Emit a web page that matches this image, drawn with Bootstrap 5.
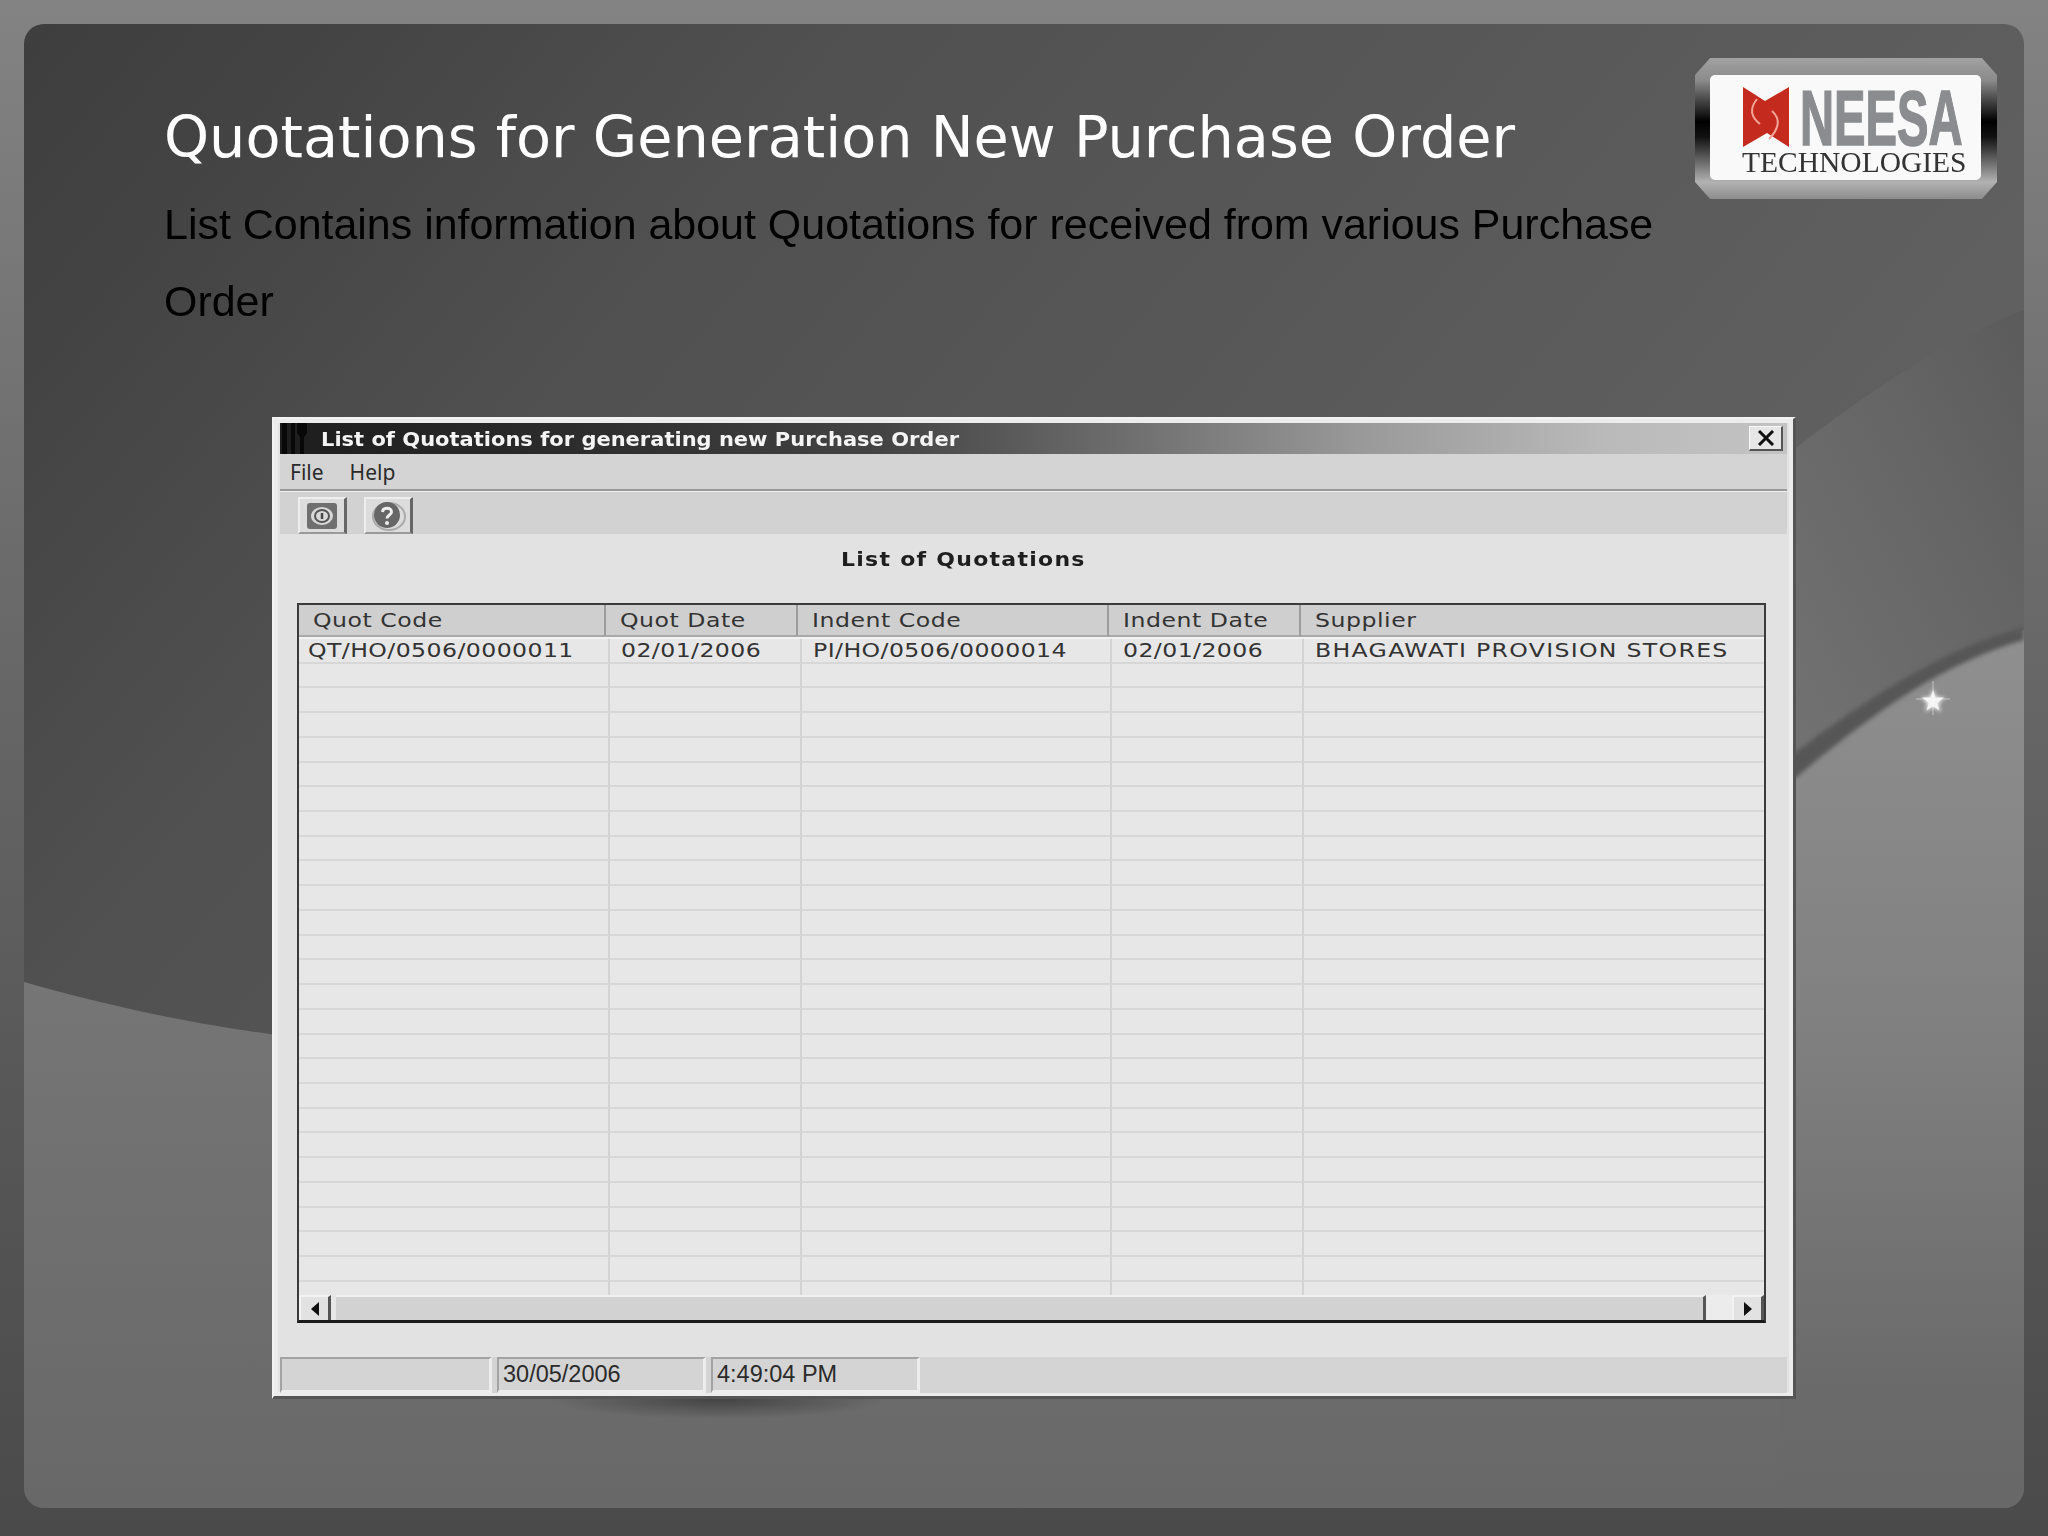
<!doctype html>
<html lang="en">
<head>
<meta charset="utf-8">
<title>Quotations for Generation New Purchase Order</title>
<link rel="stylesheet" href="https://cdn.jsdelivr.net/npm/bootstrap@5.3.0/dist/css/bootstrap.min.css">
<style>
html,body{margin:0;width:2048px;height:1536px;overflow:hidden;}
body{font-family:"Liberation Sans",Arial,sans-serif;background:linear-gradient(180deg,#838383 0,#6c6c6c 35%,#585858 70%,#4a4a4a 100%);}
.frame{padding:24px;height:1536px;filter:blur(.55px);}
.slide-panel{position:relative;width:2000px;height:1484px;border-radius:20px;overflow:hidden;background:linear-gradient(130deg,#3e3e3e 0,#444 10%,#505050 25%,#5e5e5e 62%,#6a6a6a 100%);}
.bg-art{position:absolute;inset:0;width:2000px;height:1484px;}
.slide-flow{position:relative;padding:74px 0 0 140px;}
.slide-head{width:1800px;height:319px;}
.slide-copy{width:1532px;}
.slide-title{font-family:"DejaVu Sans",Verdana,sans-serif;font-weight:400;font-size:57.3px;line-height:80px;color:#fff;margin:0 0 8px;white-space:nowrap;}
.slide-text{font-size:42.95px;line-height:77px;color:#000;margin:0;}
.logo-bezel{position:absolute;left:1671px;top:34px;width:302px;height:141px;padding:17px 15px 19px;clip-path:polygon(5% 0,95% 0,100% 12%,100% 88%,95% 100%,5% 100%,0 88%,0 12%);background:linear-gradient(180deg,#a2a2a2 0,#8a8a8a 16%,#5a5a5a 26%,#000 45%,#111 56%,#707070 75%,#b2b2b2 88%,#8c8c8c 100%);}
.logo-face{position:relative;width:271px;height:105px;background:#f9f9f9;border-radius:5px;overflow:hidden;}
.logo-mark{position:absolute;left:33px;top:12px;width:46px;height:60px;}
.logo-name{position:absolute;left:90px;top:15px;font-weight:700;font-size:78px;line-height:56px;color:#8a8c8f;-webkit-text-stroke:1.5px #8a8c8f;transform:scaleX(.605);transform-origin:0 50%;white-space:nowrap;}
.logo-sub{position:absolute;left:32px;top:73px;font-family:"Liberation Serif",serif;font-size:29.5px;line-height:28px;color:#333;white-space:nowrap;}
.app-window{margin-left:108px;width:1524px;height:982px;background:#e2e2e2;border:solid;border-width:2px 3px 3px 2px;border-color:#f2f2f2 #555 #555 #f2f2f2;box-shadow:inset 0 0 0 4px #ececec;padding:4px 4px 3px;border-radius:0;display:flex;flex-direction:column;}
.win-title{height:31px;flex:none;background:linear-gradient(90deg,#1d1d1d 0,#2d2d2d 20%,#444 40%,#6b6b6b 55%,#9a9a9a 72%,#bababa 88%,#c3c3c3 100%);display:flex;align-items:center;padding-right:4px;margin:0 2px;}
.win-glyph{width:41px;height:31px;flex:none;}
.win-caption{font-family:"DejaVu Sans",sans-serif;font-weight:700;font-size:20px;color:#f4f4f4;white-space:nowrap;display:inline-block;transform:scaleX(1.05);transform-origin:0 50%;}
.win-close{margin-left:auto;width:34px;height:25px;padding:0;background:#e6e6e6;border:solid;border-width:1px 2px 2px 1px;border-color:#f8f8f8 #555 #555 #f8f8f8;border-radius:0;display:flex;align-items:center;justify-content:center;}
.menu-strip{height:37px;flex:none;background:#d4d4d4;padding:0 0 0 10px;margin:0 2px;border-bottom:2px solid #9a9a9a;flex-wrap:nowrap;justify-content:flex-start;gap:26px;}
.menu-entry{font-family:"Noto Sans",sans-serif;font-size:21px;line-height:30px;color:#2a2a2a;padding:0;}
.tool-strip{height:43px;flex:none;background:#d2d2d2;padding:5px 0 0 18px;gap:17px;margin:0 2px;border-top:1px solid #eee;}
.tool-btn{width:49px;height:37px;padding:0;background:#dcdcdc;border:solid;border-width:2px 3px 2px 2px;border-color:#eee #666 #999 #eee;border-radius:0;display:flex;align-items:center;justify-content:center;}
.form-body{height:823px;flex:none;padding:0 19px;display:flex;flex-direction:column;}
.form-heading{height:69px;flex:none;font-family:"DejaVu Sans",sans-serif;font-weight:700;font-size:20px;letter-spacing:1.15px;line-height:50px;color:#1e1e1e;margin:0;padding-left:544px;}
.heading-txt{display:inline-block;transform:scaleX(1.1);transform-origin:0 50%;white-space:nowrap;}
.grid-box{width:1469px;height:720px;flex:none;border:solid;border-width:2px 2px 3px 2px;border-color:#3b3b3b #3b3b3b #1b1b1b #3b3b3b;background:#e6e6e6;overflow:hidden;position:relative;}
.grid-box table{table-layout:fixed;margin:0;border-collapse:separate;border-spacing:0;font-family:"DejaVu Sans",sans-serif;color:#333;}
.cell-txt{display:inline-block;transform:scaleX(1.18);transform-origin:0 50%;white-space:nowrap;}
.head-table{width:1465px;height:32px;}
.head-table th{--bs-table-bg:#cfcfcf;background:#cfcfcf;font-weight:400;font-size:20px;letter-spacing:.44px;color:#333;height:28px;line-height:24px;padding:0 0 3px 14px;border:0;border-bottom:2px solid #a9a9a9;border-right:2px solid #9d9d9d;box-shadow:none;white-space:nowrap;overflow:visible;}
.head-table th:last-child{border-right:0;}
.rows-scroller{height:658px;overflow:hidden;border-top:2px solid #f2f2f2;}
.rows-table{width:1465px;}
.rows-table td{--bs-table-bg:#e7e7e7;background:#e7e7e7;height:24.72px;padding:1px 0 0 11px;line-height:21px;font-size:20px;letter-spacing:.35px;color:#333;border:0;border-bottom:2px solid #d7d7d7;border-right:2px solid #d3d3d3;box-shadow:none;white-space:nowrap;overflow:hidden;}
.rows-table td:first-child{padding-left:9px;}
.rows-table td:last-child{border-right:0;letter-spacing:1.1px;}
.scroll-rail{position:absolute;left:0;right:0;bottom:0;height:25px;display:flex;background:#e7e7e7;}
.scroll-btn{width:32px;height:25px;padding:0;background:#e2e2e2;border:solid;border-width:2px 3px 0 2px;border-color:#f2f2f2 #555 #555 #f2f2f2;border-radius:0;display:flex;align-items:center;justify-content:center;flex:none;}
.scroll-track{width:1370px;margin-left:5px;background:#d2d2d2;border-top:2px solid #f0f0f0;border-right:3px solid #555;flex:none;}
.scroll-gap{width:26px;flex:none;background:#ececec;}
.status-strip{height:36px;flex:none;background:#d4d4d4;margin:0 2px;gap:5px;}
.status-cell{height:36px;background:#d4d4d4;border:solid;border-width:2px 3px 3px 2px;border-color:#a3a3a3 #ededed #ededed #a3a3a3;font-family:"Liberation Sans",sans-serif;font-size:23.5px;line-height:31px;color:#2b2b2b;padding-left:4px;white-space:nowrap;}
.status-a{width:212px;}
.status-b{width:209px;}
.status-c{width:209px;}
</style>
</head>
<body>
<div class="frame">
  <div class="slide-panel">
    <svg class="bg-art" viewBox="0 0 2000 1484" aria-hidden="true">
      <defs>
        <linearGradient id="gLow" gradientUnits="userSpaceOnUse" x1="0" y1="940" x2="0" y2="1484"><stop offset="0" stop-color="#767676"/><stop offset="1" stop-color="#686868"/></linearGradient>
        <linearGradient id="gMid" x1="0" y1="1" x2="1" y2="0"><stop offset="0" stop-color="#737373"/><stop offset=".6" stop-color="#666"/><stop offset="1" stop-color="#5b5b5b"/></linearGradient>
        <linearGradient id="gRight" gradientUnits="userSpaceOnUse" x1="0" y1="612" x2="0" y2="1484"><stop offset="0" stop-color="#8f8f8f"/><stop offset=".45" stop-color="#808080"/><stop offset=".87" stop-color="#6a6a6a"/><stop offset="1" stop-color="#686868"/></linearGradient>
        <radialGradient id="gShade"><stop offset="0" stop-color="#3c3c3c" stop-opacity=".85"/><stop offset="1" stop-color="#3c3c3c" stop-opacity="0"/></radialGradient>
        <filter id="fGlow" x="-80%" y="-80%" width="260%" height="260%"><feGaussianBlur stdDeviation="2"/></filter>
        <filter id="fSoft" x="-20%" y="-20%" width="140%" height="140%"><feGaussianBlur stdDeviation="2"/></filter>
      </defs>
      <path d="M0 958 C120 992 200 1004 260 1012 C900 1076 1500 960 1773 800 V1484 H0 Z" fill="url(#gLow)"/>
      <path d="M1755 437 C1830 378 1920 315 2000 286 V640 C1900 660 1830 690 1755 745 Z" fill="url(#gMid)"/>
      <path d="M1755 760 C1830 698 1920 635 2000 606 V1484 H1755 Z" fill="url(#gRight)"/>
      <path d="M1755 741 C1830 683 1920 622 2000 604 V616 C1915 640 1840 695 1755 768 Z" fill="#565656" filter="url(#fSoft)"/>
      <ellipse cx="695" cy="1375" rx="167" ry="20" fill="url(#gShade)"/>
      <g transform="translate(1909 677)">
        <polygon points="0,-12 3,-3.500 12,-3.500 5,2.500 8,11 0,5.500 -8,11 -5,2.500 -12,-3.500 -3,-3.500" fill="#fff" filter="url(#fGlow)"/>
        <polygon points="0,-11 2.500,-3.500 11,-3.500 4,2 6.500,9.500 0,5 -6.500,9.500 -4,2 -11,-3.500 -2.500,-3.500" fill="#f4f4f4"/>
        <path d="M0-20V14M-17-2H17" stroke="#fff" stroke-width=".8" opacity=".6"/>
      </g>
    </svg>
    <div class="slide-flow">
      <header class="slide-head d-flex">
        <div class="slide-copy">
          <h1 class="slide-title">Quotations for Generation New Purchase Order</h1>
          <p class="slide-text">List Contains information about Quotations for received from various Purchase Order</p>
        </div>
      </header>
      <div class="logo-bezel">
        <div class="logo-face">
          <svg class="logo-mark" viewBox="0 0 46 60" aria-hidden="true">
            <path d="M0 0 L22 14 L46 0 V60 L24 46 L0 60 Z" fill="#c42a1d"/>
            <path d="M14 12 C6 22 8 30 17 37 M29 24 C38 32 36 42 26 52" fill="none" stroke="#f2a699" stroke-width="2"/>
          </svg>
          <div class="logo-name">NEESA</div>
          <div class="logo-sub">TECHNOLOGIES</div>
        </div>
      </div>
      <div class="app-window card">
        <div class="win-title">
          <svg class="win-glyph" viewBox="0 0 41 31" aria-hidden="true"><path d="M2 0h5v31H2zM11 0h4v31h-4zM17 0h10v10l-3 4v17h-4V14l-3-4z" fill="#080808"/></svg>
          <span class="win-caption">List of Quotations for generating new Purchase Order</span>
          <button class="win-close" type="button" aria-label="Close"><svg width="20" height="16" viewBox="0 0 20 16"><path d="M3 1 17 15M17 1 3 15" stroke="#111" stroke-width="3"/></svg></button>
        </div>
        <nav class="navbar menu-strip">
          <a class="menu-entry text-decoration-none" href="#">File</a>
          <a class="menu-entry text-decoration-none" href="#">Help</a>
        </nav>
        <div class="tool-strip d-flex">
          <button class="tool-btn" type="button" aria-label="Open"><svg width="32" height="28" viewBox="0 0 32 28"><rect x="1" y="1" width="30" height="26" rx="3" fill="#6f6f6f"/><ellipse cx="16" cy="14" rx="11" ry="9" fill="#d8d8d8"/><ellipse cx="16" cy="14" rx="7" ry="6" fill="none" stroke="#555" stroke-width="2"/><path d="M16 11v6" stroke="#444" stroke-width="2.500"/></svg></button>
          <button class="tool-btn" type="button" aria-label="Help"><svg width="36" height="30" viewBox="0 0 36 30"><ellipse cx="19" cy="15.500" rx="16" ry="13.500" fill="none" stroke="#aaa" stroke-width="2"/><circle cx="17" cy="14" r="13" fill="#666"/><path d="M12.500 11c.5-5 9-5 9 0 0 3-4.500 3-4.500 6.500" fill="none" stroke="#eee" stroke-width="3"/><circle cx="17" cy="22" r="2" fill="#eee"/></svg></button>
        </div>
        <div class="form-body">
          <h2 class="form-heading"><span class="heading-txt">List of Quotations</span></h2>
          <div class="grid-box">
            <table class="table head-table">
              <colgroup><col width="307"><col width="192"><col width="311"><col width="192"><col></colgroup>
              <thead><tr><th><span class="cell-txt">Quot Code</span></th><th><span class="cell-txt">Quot Date</span></th><th><span class="cell-txt">Indent Code</span></th><th><span class="cell-txt">Indent Date</span></th><th><span class="cell-txt">Supplier</span></th></tr></thead>
            </table>
            <div class="rows-scroller">
              <table class="table rows-table">
                <colgroup><col width="311"><col width="192"><col width="310"><col width="192"><col></colgroup>
                <tbody>
                  <tr><td><span class="cell-txt">QT/HO/0506/0000011</span></td><td><span class="cell-txt">02/01/2006</span></td><td><span class="cell-txt">PI/HO/0506/0000014</span></td><td><span class="cell-txt">02/01/2006</span></td><td><span class="cell-txt">BHAGAWATI PROVISION STORES</span></td></tr>
                  <tr><td></td><td></td><td></td><td></td><td></td></tr>
                  <tr><td></td><td></td><td></td><td></td><td></td></tr>
                  <tr><td></td><td></td><td></td><td></td><td></td></tr>
                  <tr><td></td><td></td><td></td><td></td><td></td></tr>
                  <tr><td></td><td></td><td></td><td></td><td></td></tr>
                  <tr><td></td><td></td><td></td><td></td><td></td></tr>
                  <tr><td></td><td></td><td></td><td></td><td></td></tr>
                  <tr><td></td><td></td><td></td><td></td><td></td></tr>
                  <tr><td></td><td></td><td></td><td></td><td></td></tr>
                  <tr><td></td><td></td><td></td><td></td><td></td></tr>
                  <tr><td></td><td></td><td></td><td></td><td></td></tr>
                  <tr><td></td><td></td><td></td><td></td><td></td></tr>
                  <tr><td></td><td></td><td></td><td></td><td></td></tr>
                  <tr><td></td><td></td><td></td><td></td><td></td></tr>
                  <tr><td></td><td></td><td></td><td></td><td></td></tr>
                  <tr><td></td><td></td><td></td><td></td><td></td></tr>
                  <tr><td></td><td></td><td></td><td></td><td></td></tr>
                  <tr><td></td><td></td><td></td><td></td><td></td></tr>
                  <tr><td></td><td></td><td></td><td></td><td></td></tr>
                  <tr><td></td><td></td><td></td><td></td><td></td></tr>
                  <tr><td></td><td></td><td></td><td></td><td></td></tr>
                  <tr><td></td><td></td><td></td><td></td><td></td></tr>
                  <tr><td></td><td></td><td></td><td></td><td></td></tr>
                  <tr><td></td><td></td><td></td><td></td><td></td></tr>
                  <tr><td></td><td></td><td></td><td></td><td></td></tr>
                  <tr><td></td><td></td><td></td><td></td><td></td></tr>
                </tbody>
              </table>
            </div>
            <div class="scroll-rail">
              <button class="scroll-btn" type="button" aria-label="Scroll left"><svg width="10" height="14" viewBox="0 0 10 14"><path d="M9 0v14L1 7z" fill="#111"/></svg></button>
              <div class="scroll-track"></div>
              <div class="scroll-gap"></div>
              <button class="scroll-btn" type="button" aria-label="Scroll right"><svg width="10" height="14" viewBox="0 0 10 14"><path d="M1 0v14l8-7z" fill="#111"/></svg></button>
            </div>
          </div>
        </div>
        <div class="status-strip d-flex">
          <div class="status-cell status-a"></div>
          <div class="status-cell status-b">30/05/2006</div>
          <div class="status-cell status-c">4:49:04 PM</div>
        </div>
      </div>
    </div>
  </div>
</div>
<script src="https://cdn.jsdelivr.net/npm/bootstrap@5.3.0/dist/js/bootstrap.bundle.min.js"></script>
</body>
</html>
